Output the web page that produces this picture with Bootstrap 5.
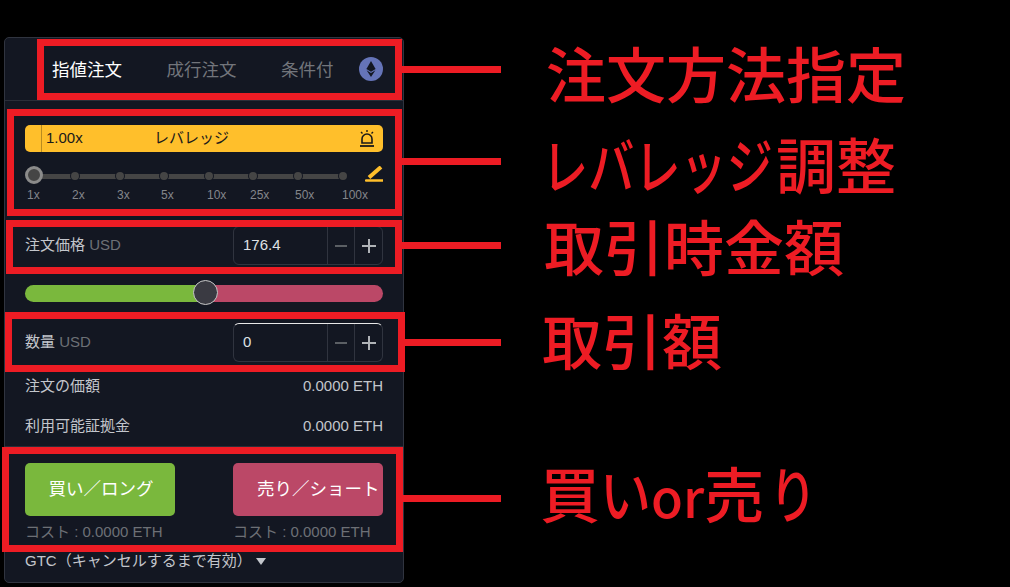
<!DOCTYPE html>
<html lang="ja">
<head>
<meta charset="utf-8">
<title>注文パネル</title>
<link href="https://cdn.jsdelivr.net/npm/bootstrap@5.3.0/dist/css/bootstrap.min.css" rel="stylesheet">
<style>
html,body{height:587px;overflow:hidden;background:#000;}
body{font-family:"Liberation Sans","Noto Sans CJK JP",sans-serif;position:relative;color:#c3c6cc;font-size:15px;}
.order-panel{width:400px;height:546px;margin:37px 0 0 4px;background:#131722;border:1px solid #30343f;border-radius:5px;}
.tab-row{height:63px;border-bottom:1px solid #2a2e39;padding:0 20px 0 47px;}
.tab-item{font-size:17.5px;color:#72757b;line-height:1;}
.tab-item.on{color:#fff;}
.tab-gap{gap:44.5px;margin-top:3px;}
.eth-ico{width:24px;height:24px;display:block;}
.lev-sec{padding:24px 20px 0;height:120px;}
.lev-bar{height:27px;background:#ffbf2b;border-radius:5px;color:#1a1a1a;font-size:15px;}
.lev-val{border-left:1px solid #b98c20;margin-left:16px;padding-left:4px;width:113px;height:100%;}
.bell-ico{width:16px;height:20px;margin-right:8px;display:block;}
.lev-track{position:relative;height:18px;margin-top:14px;}
.lev-line{position:absolute;left:9px;width:309px;top:8px;height:5px;background:#454545;}
.lev-dot{position:absolute;width:8px;height:8px;border-radius:50%;background:#454545;top:6px;box-shadow:0 0 0 1px #131722;}
.d2{left:46px}.d3{left:91px}.d4{left:135px}.d5{left:180px}.d6{left:224px}.d7{left:269px}.d8{left:314px}
.lev-knob{position:absolute;left:0;top:0;width:18px;height:18px;border-radius:50%;background:#454545;border:3px solid #8b8b8b;}
.pen-ico{position:absolute;right:0;top:0;width:18px;height:18px;}
.lev-labels{position:relative;height:14px;margin-top:4px;font-size:12px;color:#84868b;line-height:14px;}
.lev-labels span{position:absolute;top:0;}
.l1{left:2px}.l2{left:47px}.l3{left:92px}.l4{left:136px}.l5{left:182px}.l6{left:225px}.l7{left:270px}.l8{left:317px}
.field-row{padding:0 20px;height:39px;}
.row-a{margin-top:5px;}
.unit{color:#6d7076;}
.num-box{width:150px;height:39px;border:1px solid #30343f;border-radius:6px;}
.num-box.lit{border-top-color:#e8e8e8;}
.num-val{width:93px;padding-left:9px;color:#dfe1e4;font-size:15px;}
.num-btn{width:27px;height:100%;border-left:1px solid #30343f;padding:0;background:none;border-top:0;border-right:0;border-bottom:0;display:flex;align-items:center;justify-content:center;}
.num-btn.plus{width:28px;}
.num-btn svg{width:14px;height:14px;display:block;}
.ratio-wrap{padding:20px 20px 0;height:40px;}
.ratio-bar{position:relative;height:17px;border-radius:9px;background:linear-gradient(90deg,#7ab83d 50%,#bb4867 50%);}
.ratio-knob{position:absolute;left:168px;top:-5px;width:25px;height:25px;border-radius:50%;background:#3a3a42;border:1px solid #c7c7c7;}
.row-b{margin-top:18px;}
.info-row{padding:0 20px;height:40px;color:#c3c6cc;}
.row-c{margin-top:4px;}
.trade-sec{padding:16px 20px 0;border-top:1px solid #2a2e39;height:100px;}
.trade-col{width:150px;}
.trade-btn{display:block;width:150px;height:53px;border:0;border-radius:5px;color:#fff;font-size:17.5px;padding:0;white-space:nowrap;}
.trade-btn.buy{background:#7ab83d;padding-left:2px;}
.trade-btn.sell{background:#bb4867;padding-left:24px;text-align:left;}
.cost{font-size:15px;color:#6d7076;margin-top:7px;white-space:nowrap;line-height:18px;}
.gtc-row{padding:0 20px;height:30px;color:#c3c6cc;font-size:15px;}
.caret{width:0;height:0;border-left:5.5px solid transparent;border-right:5.5px solid transparent;border-top:7px solid #c3c6cc;margin-left:4px;}
.mark-box{position:absolute;border:7px solid #ed1c24;pointer-events:none;}
.b1{left:37px;top:39px;width:365px;height:61px;}
.b2{left:7px;top:109px;width:395px;height:107px;}
.b3{left:6px;top:220px;width:396px;height:54px;}
.b4{left:5px;top:312px;width:400px;height:60px;}
.b5{left:2px;top:447px;width:401px;height:105px;}
.mark-line{position:absolute;height:7px;background:#ed1c24;width:100px;left:401px;}
.m1{top:66px}.m2{top:158px}.m3{top:242px}.m4{top:339px}.m5{top:495px}
.mark-text{position:absolute;color:#ed1c24;font-family:"Noto Sans CJK JP",sans-serif;font-weight:500;font-size:60px;line-height:1;white-space:nowrap;}
.kana-run{display:inline-block;transform:scaleX(.77);transform-origin:left center;margin-right:-66px;}
.kana-one{display:inline-block;transform:scaleX(.85);transform-origin:left center;margin-right:-9px;}
.kana-end{margin-left:5px;transform:scaleX(.8);}
.latin-run{font-size:52px;}
.t1{left:546px;top:42px}
.t2{left:542px;top:133px;}
.t3{left:544px;top:215px}
.t4{left:542px;top:309px}
.t5{left:540px;top:462px}
</style>
</head>
<body>
<div class="order-panel d-flex flex-column">
  <div class="tab-row d-flex align-items-center justify-content-between">
    <div class="d-flex tab-gap">
      <span class="tab-item on">指値注文</span>
      <span class="tab-item">成行注文</span>
      <span class="tab-item">条件付</span>
    </div>
    <svg class="eth-ico" viewBox="0 0 24 24"><circle cx="12" cy="12" r="12" fill="#6574b8"/><path d="M12 4 7.4 12 12 14.7 16.6 12Z" fill="#131722"/><path d="M7.6 13.3 12 20 16.4 13.3 12 16Z" fill="#131722"/></svg>
  </div>
  <div class="lev-sec">
    <div class="lev-bar d-flex align-items-center">
      <div class="lev-val d-flex align-items-center">1.00x</div>
      <div class="flex-grow-1">レバレッジ</div>
      <svg class="bell-ico" viewBox="0 0 16 20"><path d="M3 14V10a5 5 0 0 1 10 0V14Z" fill="none" stroke="#1a1a1a" stroke-width="1.6"/><path d="M1 17h14" stroke="#1a1a1a" stroke-width="1.8"/><path d="M8 1v2M2 3l1.5 1.5M14 3l-1.5 1.5" stroke="#1a1a1a" stroke-width="1.4"/></svg>
    </div>
    <div class="lev-track">
      <div class="lev-line"></div>
      <i class="lev-dot d2"></i><i class="lev-dot d3"></i><i class="lev-dot d4"></i><i class="lev-dot d5"></i><i class="lev-dot d6"></i><i class="lev-dot d7"></i><i class="lev-dot d8"></i>
      <div class="lev-knob"></div>
      <svg class="pen-ico" viewBox="0 0 18 18"><path d="M16 1 4 11.5" stroke="#ffbf2b" stroke-width="4"/><path d="M1 14.5h17" stroke="#ffbf2b" stroke-width="2.4" stroke-linecap="round"/></svg>
    </div>
    <div class="lev-labels"><span class="l1">1x</span><span class="l2">2x</span><span class="l3">3x</span><span class="l4">5x</span><span class="l5">10x</span><span class="l6">25x</span><span class="l7">50x</span><span class="l8">100x</span></div>
  </div>
  <div class="field-row row-a d-flex align-items-center justify-content-between">
    <div>注文価格 <span class="unit">USD</span></div>
    <div class="num-box d-flex align-items-center">
      <div class="num-val">176.4</div>
      <button class="num-btn" type="button" aria-label="minus"><svg viewBox="0 0 14 14"><path d="M1 7h12" stroke="#6f7276" stroke-width="1.6"/></svg></button>
      <button class="num-btn plus" type="button" aria-label="plus"><svg viewBox="0 0 14 14"><path d="M0 7h14M7 0v14" stroke="#b0b3b7" stroke-width="2"/></svg></button>
    </div>
  </div>
  <div class="ratio-wrap"><div class="ratio-bar"><div class="ratio-knob"></div></div></div>
  <div class="field-row row-b d-flex align-items-center justify-content-between">
    <div>数量 <span class="unit">USD</span></div>
    <div class="num-box lit d-flex align-items-center">
      <div class="num-val">0</div>
      <button class="num-btn" type="button" aria-label="minus"><svg viewBox="0 0 14 14"><path d="M1 7h12" stroke="#6f7276" stroke-width="1.6"/></svg></button>
      <button class="num-btn plus" type="button" aria-label="plus"><svg viewBox="0 0 14 14"><path d="M0 7h14M7 0v14" stroke="#b0b3b7" stroke-width="2"/></svg></button>
    </div>
  </div>
  <div class="info-row row-c d-flex align-items-center justify-content-between"><span>注文の価額</span><span>0.0000 ETH</span></div>
  <div class="info-row d-flex align-items-center justify-content-between"><span>利用可能証拠金</span><span>0.0000 ETH</span></div>
  <div class="trade-sec d-flex justify-content-between">
    <div class="trade-col"><button class="trade-btn buy" type="button">買い／ロング</button><div class="cost">コスト : 0.0000 ETH</div></div>
    <div class="trade-col"><button class="trade-btn sell" type="button">売り／ショート</button><div class="cost">コスト : 0.0000 ETH</div></div>
  </div>
  <div class="gtc-row d-flex align-items-center">GTC（キャンセルするまで有効）<i class="caret"></i></div>
</div>

<div class="mark-box b1"></div><div class="mark-box b2"></div><div class="mark-box b3"></div><div class="mark-box b4"></div><div class="mark-box b5"></div>
<div class="mark-line m1"></div><div class="mark-line m2"></div><div class="mark-line m3"></div><div class="mark-line m4"></div><div class="mark-line m5"></div>
<div class="mark-text t1">注文方法指定</div>
<div class="mark-text t2"><span class="kana-run">レバレッジ</span>調整</div>
<div class="mark-text t3">取引時金額</div>
<div class="mark-text t4">取引額</div>
<div class="mark-text t5">買<span class="kana-one">い</span><span class="latin-run">or</span>売<span class="kana-one kana-end">り</span></div>
<script src="https://cdn.jsdelivr.net/npm/bootstrap@5.3.0/dist/js/bootstrap.bundle.min.js"></script>
</body>
</html>
